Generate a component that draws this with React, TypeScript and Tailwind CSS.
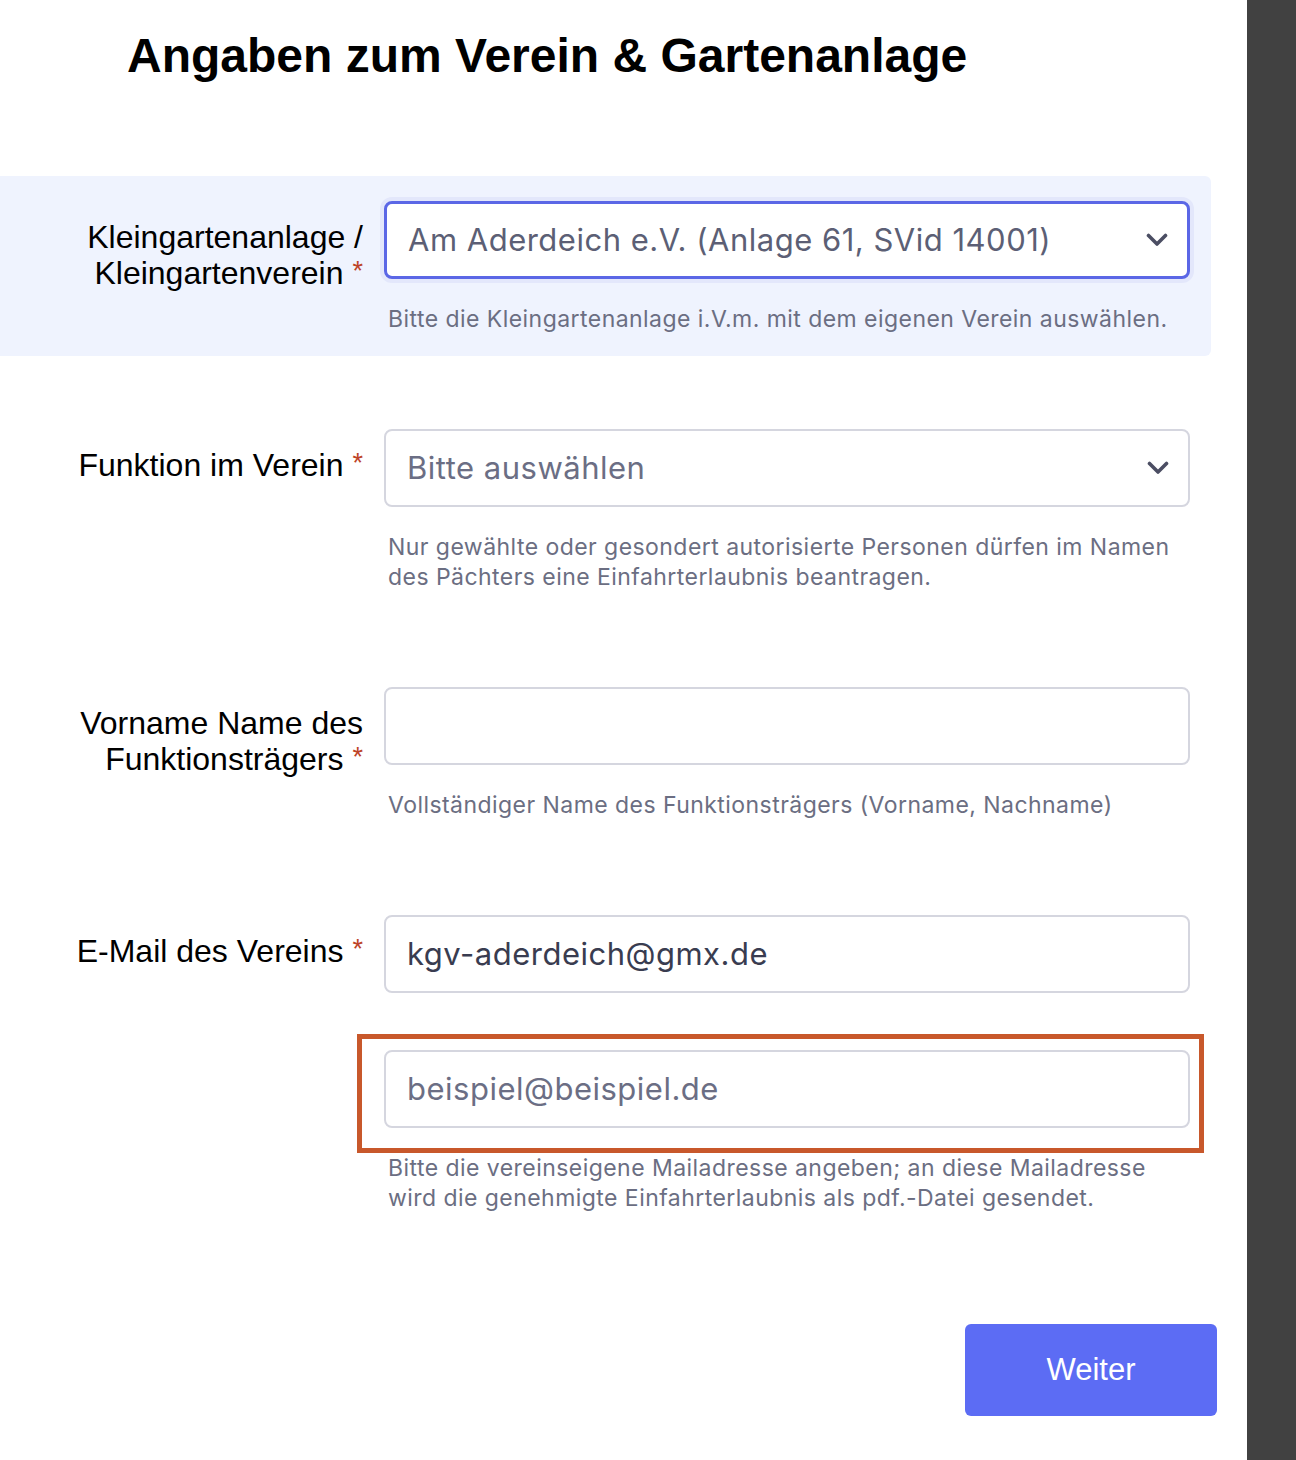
import type { ReactNode } from "react"

const LABEL = "font-['Liberation_Sans',Arial,sans-serif] text-[32px] leading-[36px] text-black"
const INTER = "font-['Inter',sans-serif] tracking-[0.5px]"

function Required() {
  return (
    <span className="ml-[9px] align-[4px] text-[27px] leading-none text-[#bd4328]">*</span>
  )
}

function Chevron() {
  return (
    <svg width="22" height="14" viewBox="0 0 22 14" fill="none" aria-hidden>
      <path
        d="M2.5 2.5 11 11l8.5-8.5"
        stroke="#4b4e63"
        strokeWidth="3.6"
        strokeLinecap="round"
        strokeLinejoin="round"
      />
    </svg>
  )
}

function Help({ children }: { children: ReactNode }) {
  return (
    <p className="pl-[4px] font-['Inter',sans-serif] text-[23px] leading-[30px] tracking-[0.45px] text-[#6b6e82]">
      {children}
    </p>
  )
}

function Row({
  label,
  children,
  highlight,
}: {
  label: ReactNode
  children: ReactNode
  highlight?: boolean
}) {
  return (
    <div
      className={`grid w-[1211px] grid-cols-[384px_806px] pt-[25px] pb-[22px] ${
        highlight ? "rounded-r-[6px] bg-[#eff3fe]" : ""
      }`}
    >
      <label className={`${LABEL} pt-[18px] pr-[21px] text-right`}>{label}</label>
      <div>{children}</div>
    </div>
  )
}

const inputBox =
  "flex h-[78px] items-center rounded-[8px] border-2 border-[#d5d6df] bg-white px-[21px] text-[31px]"

export default function App() {
  return (
    <div className="flex min-h-[1460px] bg-white">
      <main className="w-[1247px]">
        <h1 className="pt-[32px] pl-[127px] font-['Liberation_Sans',Arial,sans-serif] text-[48px] leading-[48px] font-bold text-black">
          Angaben zum Verein &amp; Gartenanlage
        </h1>

        <div className="mt-[96px] flex flex-col gap-[48px]">
          <Row
            highlight
            label={
              <>
                Kleingartenanlage /<br />
                Kleingartenverein
                <Required />
              </>
            }
          >
            <div
              className={`${INTER} flex h-[78px] items-center justify-between rounded-[8px] border-[3px] border-[#5b67e6] bg-white pr-[19px] pl-[21px] text-[31px] text-[#5c5f75] ring-4 ring-[#e3e7fb]`}
            >
              <span>Am Aderdeich e.V. (Anlage 61, SVid 14001)</span>
              <Chevron />
            </div>
            <div className="mt-[25px]">
              <Help>
                Bitte die Kleingartenanlage i.V.m. mit dem eigenen Verein
                auswählen.
              </Help>
            </div>
          </Row>

          <Row
            label={
              <>
                Funktion im Verein
                <Required />
              </>
            }
          >
            <div className={`${INTER} ${inputBox} justify-between pr-[19px] text-[#6b6e84]`}>
              <span>Bitte auswählen</span>
              <Chevron />
            </div>
            <div className="mt-[25px]">
              <Help>
                Nur gewählte oder gesondert autorisierte Personen dürfen im
                Namen
                <br />
                des Pächters eine Einfahrterlaubnis beantragen.
              </Help>
            </div>
          </Row>

          <Row
            label={
              <>
                Vorname Name des
                <br />
                Funktionsträgers
                <Required />
              </>
            }
          >
            <div className={`${INTER} ${inputBox}`} />
            <div className="mt-[25px]">
              <Help>Vollständiger Name des Funktionsträgers (Vorname, Nachname)</Help>
            </div>
          </Row>

          <Row
            label={
              <>
                E-Mail des Vereins
                <Required />
              </>
            }
          >
            <div className={`${INTER} ${inputBox} text-[#393c50]`}>
              kgv-aderdeich@gmx.de
            </div>
            <div className="mt-[41px] -mr-[14px] -ml-[27px] border-[5px] border-[#c8582b] pt-[11px] pr-[9px] pb-[20px] pl-[22px]">
              <div className={`${INTER} ${inputBox} text-[#6b6e84]`}>
                beispiel@beispiel.de
              </div>
            </div>
            <Help>
              Bitte die vereinseigene Mailadresse angeben; an diese Mailadresse
              <br />
              wird die genehmigte Einfahrterlaubnis als pdf.-Datei gesendet.
            </Help>
          </Row>
        </div>

        <div className="mt-[89px] flex justify-end pr-[30px]">
          <button
            type="button"
            className="h-[92px] w-[252px] rounded-[6px] bg-[#5c6cf4] font-['Liberation_Sans',Arial,sans-serif] text-[31px] text-white"
          >
            Weiter
          </button>
        </div>
      </main>
      <div className="w-[49px] shrink-0 bg-[#414141]" />
    </div>
  )
}
